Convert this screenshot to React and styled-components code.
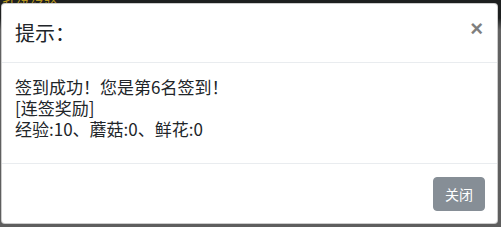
import React from "react";
import styled, { createGlobalStyle } from "styled-components";

const GlobalStyle = createGlobalStyle`
  html, body {
    margin: 0;
    padding: 0;
  }
  body {
    width: 501px;
    height: 227px;
    overflow: hidden;
    font-family: "Microsoft YaHei", "Noto Sans CJK SC", "Liberation Sans", sans-serif;
    color: #212529;
  }
`;

const Page = styled.div`
  position: relative;
  width: 501px;
  height: 227px;
  background: linear-gradient(to bottom, #1d1f1f 0, #1d1f1f 18px, #626262 30px, #5e5e5e 100%);
  overflow: hidden;
`;

const BehindText = styled.div`
  padding-left: 2px;
  height: 3px;
  overflow: hidden;
  color: #b8961e;
  font-size: 14px;
  line-height: 1;
  display: flex;
  align-items: flex-end;

  span {
    display: block;
    margin-bottom: -9px;
  }
`;

const Dialog = styled.div`
  position: absolute;
  left: 1px;
  top: 3px;
  width: 497px;
  height: 221px;
  box-sizing: border-box;
  background: #fff;
  border: 1px solid rgba(0, 0, 0, 0.2);
  border-radius: 4px;
  display: flex;
  flex-direction: column;
`;

const Header = styled.div`
  display: flex;
  align-items: center;
  justify-content: space-between;
  padding: 15px 14px 15px 13px;
  border-bottom: 1px solid #e9ecef;
`;

const Title = styled.h5`
  margin: 0;
  font-size: 20px;
  font-weight: 400;
  line-height: 28px;
`;

const Close = styled.button`
  border: 0;
  background: transparent;
  padding: 0;
  margin-top: -8px;
  font-family: "Liberation Sans", sans-serif;
  font-size: 22px;
  font-weight: 700;
  line-height: 1;
  color: #000;
  opacity: 0.5;
  cursor: pointer;
`;

const Body = styled.div`
  flex: 1;
  padding: 13px 14px 20px 13px;
  font-size: 17px;
  line-height: 21px;
`;

const Footer = styled.div`
  display: flex;
  justify-content: flex-end;
  padding: 13px 12px 12px;
  border-top: 1px solid #e9ecef;
`;

const Button = styled.button`
  border: 1px solid #868e96;
  background: #868e96;
  color: #fff;
  font-family: inherit;
  font-size: 14px;
  line-height: 20px;
  padding: 6px 11px;
  border-radius: 4px;
  cursor: pointer;
`;

export default function App() {
  return (
    <>
      <GlobalStyle />
      <Page>
        <BehindText>
          <span>升级经验</span>
        </BehindText>
        <Dialog>
          <Header>
            <Title>提示：</Title>
            <Close aria-label="关闭">×</Close>
          </Header>
          <Body>
            签到成功！您是第6名签到！
            <br />
            [连签奖励]
            <br />
            经验:10、蘑菇:0、鲜花:0
          </Body>
          <Footer>
            <Button>关闭</Button>
          </Footer>
        </Dialog>
      </Page>
    </>
  );
}
